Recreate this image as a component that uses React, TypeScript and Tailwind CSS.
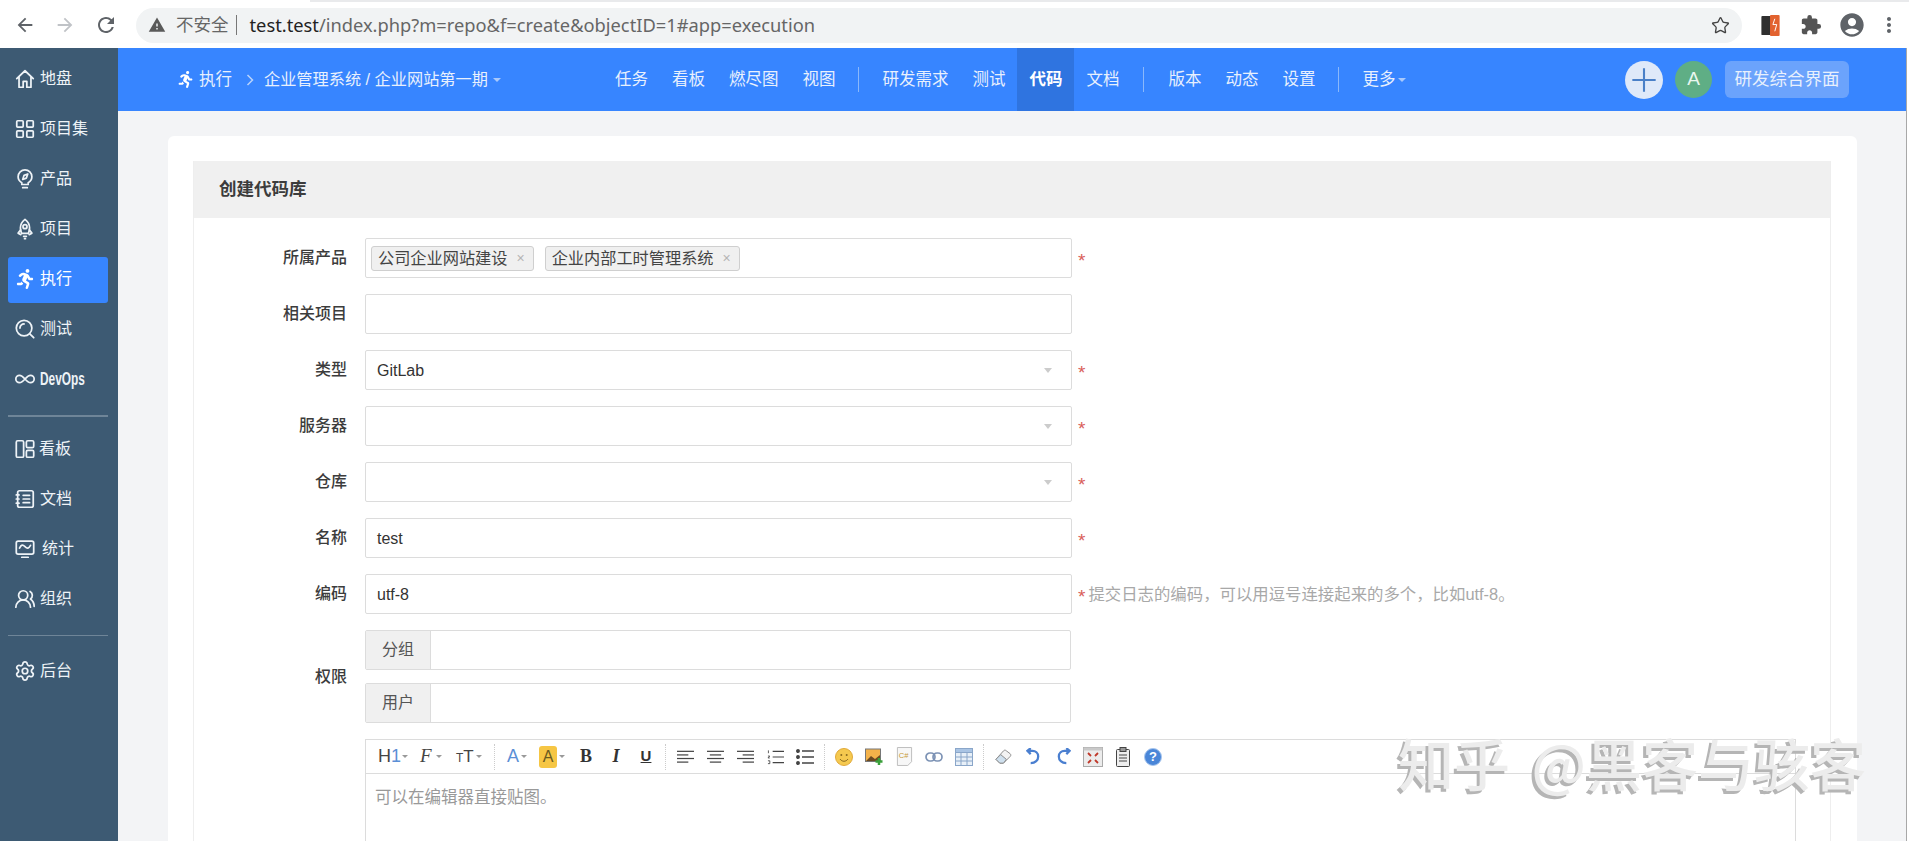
import React from "react";
import { Settings as SettingsIcon, Infinity as InfinityIcon, UsersRound, LayoutGrid, Star } from "lucide-react";
import { MdArrowBack, MdArrowForward, MdRefresh, MdWarning, MdExtension, MdAccountCircle, MdMoreVert } from "react-icons/md";
import { FaRunning } from "react-icons/fa";

const S = ({ children, className = "" }: { children: React.ReactNode; className?: string }) => (
  <svg viewBox="0 0 24 24" fill="none" stroke="currentColor" strokeWidth="1.9" strokeLinecap="round" strokeLinejoin="round" className={"w-[22px] h-[22px] shrink-0 " + className}>
    {children}
  </svg>
);

const Caret = ({ color = "border-t-[#999]", className = "" }: { color?: string; className?: string }) => (
  <span className={"inline-block w-0 h-0 border-x-[3px] border-t-[3px] border-x-transparent " + color + " " + className} />
);

const sideTop = [
  { t: "地盘", i: <S><path d="M3 11.5 12 3l9 8.5M5.5 9.5V21h4.5v-6.5h4V21h4.5V9.5" /></S> },
  { t: "项目集", i: <LayoutGrid className="w-[22px] h-[22px] shrink-0" strokeWidth={1.9} /> },
  { t: "产品", i: <S><path d="M8.5 18v-2C6 14.500 4.500 12.300 4.500 9.500a7.500 7.500 0 0 1 15 0c0 2.800-1.500 5-4 6.500v2Z" /><path d="m15 6.500-1.500 4.500-4 1.500 1.500-4.500ZM9.500 21.500h5" /></S> },
  { t: "项目", i: <S><path d="M12 1.500c3.500 2.500 5 5.800 5 9.500 0 2-.5 3.900-1.300 5.700H8.300C7.500 14.900 7 13 7 11c0-3.700 1.500-7 5-9.500Z" /><circle cx="12" cy="9.500" r="2.200" /><path d="M7.300 13 4.500 16.500l3 1.700M16.700 13l2.800 3.500-3 1.700M10.500 20h3M11.500 22.500h1" /></S> },
];
const sideMid = [
  { t: "测试", i: <S><circle cx="11" cy="11" r="8.500" /><path d="M6.500 11A4.500 4.500 0 0 1 11 6.500M17.500 17.500l4 4" /></S> },
];
const sideBoard = [
  { t: "看板", ml: "ml-[-1px]", i: <S><rect x="2.500" y="3" width="8" height="18" rx="1.500" /><rect x="13.500" y="3" width="8" height="7.500" rx="1.500" /><rect x="13.500" y="13.500" width="8" height="7.500" rx="1.500" /></S> },
  { t: "文档", ml: "", i: <S><rect x="4" y="3" width="17" height="18" rx="2" /><path d="M10 8h7M10 12h7M10 16h7M2.500 7.500h3M2.500 12h3M2.500 16.500h3" /></S> },
  { t: "统计", ml: "ml-[2px]", i: <S><rect x="2.500" y="3.500" width="19" height="14" rx="2" /><path d="M6 11c2-4 3.500-4 6-1.500s4 2 6-1.500M8.500 21h7" /></S> },
  { t: "组织", ml: "", i: <UsersRound className="w-[22px] h-[22px] shrink-0" strokeWidth={1.9} /> },
];

const SideRow = ({ t, i, ml = "" }: { t: string; i: React.ReactNode; ml?: string }) => (
  <div className="h-[50px] ml-2 pl-[6px] flex items-center gap-[4px] text-[16px] text-[#eef3f7]">
    {i}
    <span className={ml}>{t}</span>
  </div>
);

const Input = ({ children, arrow }: { children?: React.ReactNode; arrow?: boolean }) => (
  <div className="w-[707px] h-10 border border-[#dcdcdc] rounded-[2px] bg-white flex items-center pl-[11px] pr-[10px] pt-px text-[16px] text-[#333]">
    <span className="flex-1">{children}</span>
    {arrow && <span className="w-0 h-0 border-x-[4.5px] border-t-[5px] border-x-transparent border-t-[#ccc] mr-[9px]" />}
  </div>
);

const Req = () => <span className="ml-[6px] text-[#d9605a] text-[19px] leading-none mt-[4px]">*</span>;

const Row = ({ label, children }: { label: string; children: React.ReactNode }) => (
  <div className="flex items-center h-10 mb-4">
    <div className="w-[153px] text-right text-[16px] font-medium text-[#3c3c3c] pb-px">{label}</div>
    <div className="ml-[18px] flex items-center">{children}</div>
  </div>
);

const Tag = ({ t }: { t: string }) => (
  <span className="h-[25px] flex items-center bg-[#f0f0f0] border border-[#cfcfcf] rounded-[3px] pl-[6px] pr-[8px] text-[16.2px] text-[#444] mr-[11px]">
    {t}
    <span className="ml-[9px] text-[#b5b5b5] text-[14px] leading-none">×</span>
  </span>
);

const Group = ({ label }: { label: string }) => (
  <div className="w-[706px] h-10 border border-[#dcdcdc] rounded-[2px] flex">
    <div className="w-[65px] bg-[#f0f0f0] border-r border-[#dcdcdc] flex items-center justify-center text-[16px] text-[#555]">{label}</div>
  </div>
);

const Cell = ({ children }: { children: React.ReactNode }) => (
  <div className="w-[30px] flex items-center justify-center">{children}</div>
);
const Sep = () => <div className="w-px h-[26px] mx-[4px] border-l border-dotted border-[#ccc]" />;
const Lines = ({ rows }: { rows: [number, number][] }) => (
  <svg viewBox="0 0 18 14" className="w-[17px] h-[14px]" stroke="#444" strokeWidth="1.3">
    {rows.map(([a, b], k) => <line key={k} x1={a} x2={b} y1={1 + k * 3.8} y2={1 + k * 3.8} />)}
  </svg>
);

const Nav = ({ t, on }: { t: string; on?: boolean }) => (
  <div className={"flex items-center px-3 " + (on ? "bg-[#2f74e0] font-bold text-white" : "")}>{t}</div>
);
const NavSep = ({ w = "mx-[11px]" }: { w?: string }) => <div className={"self-center w-px h-[25px] bg-[#8ab8fb] " + w} />;

export default function App() {
  return (
    <div className="relative w-full h-[841px] overflow-hidden bg-white font-['Liberation_Sans','Noto_Sans_CJK_SC',sans-serif]">
      {/* browser chrome */}
      <div className="h-12 relative">
        <div className="absolute top-0 left-[310px] right-0 h-[2px] bg-[#e9eaec]" />
        <div className="h-12 flex items-center pt-[2px] text-[#555]">
          <MdArrowBack className="ml-[14px] w-[22px] h-[22px] text-[#5f6368]" />
          <MdArrowForward className="ml-[18px] w-[22px] h-[22px] text-[#c0c3c7]" />
          <MdRefresh className="ml-[18px] w-[24px] h-[24px] text-[#5f6368]" />
          <div className="ml-[18px] w-[1606px] h-[35px] rounded-full bg-[#f1f3f4] flex items-center pl-[12px] pr-[12px]">
            <MdWarning className="w-[18px] h-[18px] text-[#5a5a5a]" />
            <span className="ml-[10px] text-[#666] text-[17.5px]">不安全</span>
            <span className="mx-[7px] w-px h-[20px] bg-[#777]" />
            <span className="ml-[6px] font-['Noto_Sans','Noto_Sans_CJK_SC',sans-serif] text-[18.3px] text-[#666]">
              <span className="text-[#222]">test.test</span>/index.php?m=repo&amp;f=create&amp;objectID=1#app=execution
            </span>
            <Star className="ml-auto w-[19px] h-[19px] text-[#444]" strokeWidth={1.7} />
          </div>
          <svg viewBox="0 0 21 24" className="ml-[18px] w-[21px] h-[23px]">
            <rect x="1" y="2" width="10" height="20" fill="#2f2f2f" rx="1" />
            <rect x="10" y="1" width="10" height="22" fill="#e2622f" rx="1" />
            <path d="m15 5-2 6h4l-2 7" fill="none" stroke="#fff" strokeWidth="1" />
          </svg>
          <MdExtension className="ml-[19px] w-[22px] h-[22px] text-[#555]" />
          <MdAccountCircle className="ml-[16px] w-[28px] h-[28px] text-[#5f6368]" />
          <MdMoreVert className="ml-[11px] w-[24px] h-[24px] text-[#5f6368]" />
        </div>
      </div>

      <div className="flex h-[793px]">
        {/* sidebar */}
        <aside className="w-[118px] shrink-0 bg-[#3d5a73] pt-[6px]">
          {sideTop.map((s) => <SideRow key={s.t} t={s.t} i={s.i} />)}
          <div className="h-[50px] pt-[3px]">
            <div className="ml-2 mr-[10px] pl-[7px] h-[46px] pb-[3px] rounded-[3px] bg-[#3785ff] flex items-center gap-[5px] text-[16px] text-white">
              <FaRunning className="w-[20px] h-[20px] shrink-0" />
              <span>执行</span>
            </div>
          </div>
          {sideMid.map((s) => <SideRow key={s.t} t={s.t} i={s.i} />)}
          <div className="h-[50px] ml-2 pl-[6px] flex items-center gap-[4px] text-[#eef3f7]">
            <InfinityIcon className="w-[22px] h-[22px] shrink-0" strokeWidth={1.9} />
            <span className="text-[18px] font-bold scale-x-[0.66] origin-left">DevOps</span>
          </div>
          <div className="ml-2 mr-[10px] mt-[11px] mb-[7px] h-[2px] bg-[#6f8598]" />
          {sideBoard.map((s) => <SideRow key={s.t} t={s.t} i={s.i} ml={s.ml} />)}
          <div className="ml-2 mr-[10px] mt-[11px] mb-[10px] h-px bg-[#6f8598]" />
          <SideRow t="后台" i={<SettingsIcon className="w-[22px] h-[22px] shrink-0" strokeWidth={1.9} />} />
        </aside>

        {/* main */}
        <main className="flex-1 min-w-0 flex flex-col bg-[#f3f4f6] overflow-hidden">
          <header className="h-[63px] shrink-0 bg-[#3785ff] flex items-center pl-[59px] pr-[57px] text-[16.5px] text-[#e8f0fd]">
            <FaRunning className="w-[17px] h-[17px] text-white" />
            <span className="ml-[5px]">执行</span>
            <svg viewBox="0 0 8 12" className="ml-[14px] w-[8px] h-[12px]" fill="none" stroke="#b9d3fb" strokeWidth="1.5"><path d="m1.5 1 5 5-5 5" /></svg>
            <span className="ml-[10px] text-[16.2px]">企业管理系统 / 企业网站第一期</span>
            <Caret color="border-t-[#a9c9fb]" className="ml-[5px] !border-x-[4px] !border-t-[4px]" />
            <nav className="ml-[102px] flex items-stretch h-full">
              <Nav t="任务" /><Nav t="看板" /><Nav t="燃尽图" /><Nav t="视图" />
              <NavSep />
              <Nav t="研发需求" /><Nav t="测试" /><Nav t="代码" on /><Nav t="文档" />
              <NavSep w="mx-[12px]" />
              <Nav t="版本" /><Nav t="动态" /><Nav t="设置" />
              <NavSep />
              <div className="flex items-center px-3">
                更多<Caret color="border-t-[#a9c9fb]" className="ml-[3px] !border-x-[4px] !border-t-[4px]" />
              </div>
            </nav>
            <div className="ml-auto w-[38px] h-[38px] rounded-full bg-[#dfe9f9] flex items-center justify-center">
              <svg viewBox="0 0 24 24" className="w-[28px] h-[28px]" stroke="#4a80c8" strokeWidth="1.8"><path d="M12 2v20M2 12h20" /></svg>
            </div>
            <div className="ml-[12px] w-[37px] h-[37px] rounded-full bg-[#5fae85] flex items-center justify-center text-[#e9f7ef] text-[19px]">A</div>
            <div className="ml-[13px] w-[124px] h-[37px] rounded-[6px] bg-[#6ba3fc] flex items-center justify-center text-[17.5px] text-[#e8f0fd]">研发综合界面</div>
          </header>

          <div className="flex-1 pt-[25px] pl-[50px] pr-[49px] min-h-0">
            <div className="h-[900px] bg-white rounded-md px-[25px] pt-[25px]">
              <div className="h-full border-x border-[#eeeeee] mr-px">
                <div className="h-[57px] bg-[#f0f0f0] flex items-center pl-[25px] text-[17.5px] font-bold text-[#3c3c3c]">创建代码库</div>
                <div className="pt-5">
                  <Row label="所属产品">
                    <div className="w-[707px] h-10 border border-[#dcdcdc] rounded-[2px] flex items-center pl-[5px]">
                      <Tag t="公司企业网站建设" />
                      <Tag t="企业内部工时管理系统" />
                    </div>
                    <Req />
                  </Row>
                  <Row label="相关项目"><Input /></Row>
                  <Row label="类型"><Input arrow>GitLab</Input><Req /></Row>
                  <Row label="服务器"><Input arrow /><Req /></Row>
                  <Row label="仓库"><Input arrow /><Req /></Row>
                  <Row label="名称"><Input>test</Input><Req /></Row>
                  <Row label="编码">
                    <Input>utf-8</Input>
                    <Req />
                    <span className="ml-[3px] text-[16.4px] text-[#a8a8a8]">提交日志的编码，可以用逗号连接起来的多个，比如utf-8。</span>
                  </Row>
                  <div className="flex items-center mb-4 h-[93px]">
                    <div className="w-[153px] text-right text-[16px] font-medium text-[#3c3c3c]">权限</div>
                    <div className="ml-[18px] flex flex-col gap-[13px]">
                      <Group label="分组" />
                      <Group label="用户" />
                    </div>
                  </div>
                  <div className="flex">
                    <div className="w-[153px]" />
                    <div className="ml-[18px] w-[1431px] h-[200px] border border-[#dcdcdc]">
                      <div className="h-[34px] border-b border-[#dcdcdc] flex items-center pl-[12px] text-[#444]">
                        <div className="w-[29px] flex items-center text-[18px]">H<span className="text-[#5b8fd6]">1</span><Caret className="ml-[1px]" /></div>
                        <div className="ml-[13px] w-[20px] flex items-center font-['Liberation_Serif',serif] italic text-[19px]">F<Caret className="ml-[4px]" /></div>
                        <div className="ml-[16px] w-[25px] flex items-center"><span className="text-[12px] mt-[2px]">T</span><span className="text-[17px]">T</span><Caret className="ml-[2px]" /></div>
                        <div className="ml-[13px] w-px h-[26px] border-l border-dotted border-[#ccc]" />
                        <div className="ml-[12px] w-[20px] flex items-center text-[18px] text-[#5b8fd6]">A<Caret className="ml-[2px]" /></div>
                        <div className="ml-[12px] w-[26px] flex items-center text-[16px]"><span className="w-[19px] h-[22px] bg-[#f6c644] rounded-[3px] flex items-center justify-center text-[#6a5a20]">A</span><Caret className="ml-[2px]" /></div>
                        <div className="ml-[6px] flex">
                          <Cell><span className="font-['Liberation_Serif',serif] font-bold text-[18px] text-[#333]">B</span></Cell>
                          <Cell><span className="font-['Liberation_Serif',serif] italic font-bold text-[18px] text-[#333]">I</span></Cell>
                          <Cell><span className="font-bold text-[15px] underline text-[#333]">U</span></Cell>
                        </div>
                        <Sep />
                        <div className="flex">
                          <Cell><Lines rows={[[0,18],[0,12],[0,18],[0,12]]} /></Cell>
                          <Cell><Lines rows={[[0,18],[3,15],[0,18],[3,15]]} /></Cell>
                          <Cell><Lines rows={[[0,18],[6,18],[0,18],[6,18]]} /></Cell>
                          <Cell>
                            <svg viewBox="0 0 18 16" className="w-[17px] h-[16px]" stroke="#444" strokeWidth="1.3"><path d="M6 2h12M6 8h12M6 14h12" /><path d="M1.5 1v3M1 7h2l-2 2h2M1 12h2v3H1" strokeWidth=".9" fill="none" /></svg>
                          </Cell>
                          <Cell>
                            <svg viewBox="0 0 18 16" className="w-[18px] h-[16px]" stroke="#444" strokeWidth="1.3"><path d="M6 2h12M6 8h12M6 14h12" /><circle cx="2" cy="2" r="1.3" fill="#444" /><circle cx="2" cy="8" r="1.3" fill="#444" /><circle cx="2" cy="14" r="1.3" fill="#444" /></svg>
                          </Cell>
                        </div>
                        <Sep />
                        <div className="flex">
                          <Cell>
                            <svg viewBox="0 0 18 18" className="w-[18px] h-[18px]"><circle cx="9" cy="9" r="8.5" fill="#f5c94f" stroke="#e0a93a" /><circle cx="6.3" cy="7" r="1" fill="#8a6a20" /><circle cx="11.7" cy="7" r="1" fill="#8a6a20" /><path d="M5 11c2 3 6 3 8 0" fill="none" stroke="#8a6a20" /></svg>
                          </Cell>
                          <Cell>
                            <svg viewBox="0 0 18 18" className="w-[18px] h-[18px]"><rect x="0.5" y="1" width="15" height="12.5" fill="#f4b24a" stroke="#777" /><path d="M1 13l5-5 4 3 5-4v6H1Z" fill="#6b4a22" /><path d="M14 10v7M10.5 13.5h7" stroke="#3aa03a" strokeWidth="2.5" /></svg>
                          </Cell>
                          <Cell>
                            <svg viewBox="0 0 18 20" className="w-[17px] h-[19px]"><path d="M1.5 .5h15v15l-4 4h-11Z" fill="#f7f7f7" stroke="#bbb" /><text x="3" y="12" fontSize="8" fill="#c79a3a" fontFamily="Liberation Sans">C#</text></svg>
                          </Cell>
                          <Cell>
                            <svg viewBox="0 0 18 10" className="w-[18px] h-[10px]" fill="none" stroke="#7d93b5" strokeWidth="1.7"><rect x="1" y="1" width="9" height="8" rx="4" /><rect x="8" y="1" width="9" height="8" rx="4" /></svg>
                          </Cell>
                          <Cell>
                            <svg viewBox="0 0 18 18" className="w-[18px] h-[18px]" stroke="#8aa6c9" strokeWidth="1"><rect x=".5" y=".5" width="17" height="17" fill="#e8f0f8" /><rect x=".5" y=".5" width="17" height="4" fill="#a9c4e4" /><path d="M6 4.5v13M12 4.5v13M.5 9h17M.5 13h17" fill="none" /></svg>
                          </Cell>
                        </div>
                        <Sep />
                        <div className="flex">
                          <Cell>
                            <svg viewBox="0 0 20 18" className="w-[19px] h-[17px]"><path d="M2 12 10 3c1-1 2-1 3 0l4 3c1 1 1 2 0 3l-7 7H6Z" fill="#f3f3f3" stroke="#888" /><path d="M2 12l5-5 6 5-3 4H6Z" fill="#cfe0ee" stroke="#888" /></svg>
                          </Cell>
                          <Cell>
                            <svg viewBox="0 0 16 18" className="w-[15px] h-[17px]" fill="none" stroke="#4a7fd0" strokeWidth="2.4"><path d="M5 16c5 0 8-3 8-7s-3-6-6-6H2M5 0 1.5 3 5 6.5" /></svg>
                          </Cell>
                          <Cell>
                            <svg viewBox="0 0 16 18" className="w-[15px] h-[17px]" fill="none" stroke="#4a7fd0" strokeWidth="2.4"><path d="M11 16c-5 0-8-3-8-7s3-6 6-6h5M11 0l3.5 3L11 6.5" /></svg>
                          </Cell>
                          <Cell>
                            <svg viewBox="0 0 20 20" className="w-[20px] h-[20px]"><rect x=".5" y=".5" width="19" height="19" fill="#ececec" stroke="#aaa" /><rect x=".5" y=".5" width="19" height="3" fill="#c9c9c9" /><path d="M5 6l3 3M15 6l-3 3M5 16l3-3M15 16l-3-3" stroke="#c0392b" strokeWidth="1.8" /></svg>
                          </Cell>
                          <Cell>
                            <svg viewBox="0 0 16 20" className="w-[16px] h-[20px]"><rect x="1.5" y="2.5" width="13" height="17" rx="1" fill="#eee" stroke="#444" /><rect x="5" y=".5" width="6" height="4" fill="#999" stroke="#444" /><path d="M4 8h8M4 11h8M4 14h8" stroke="#444" /></svg>
                          </Cell>
                          <Cell>
                            <span className="w-[18px] h-[18px] rounded-full bg-[#4a86d8] border border-[#a8c6ee] flex items-center justify-center text-white text-[13px] font-bold leading-none">?</span>
                          </Cell>
                        </div>
                      </div>
                      <div className="pl-[9px] pt-[11px] text-[16.5px] text-[#999]">可以在编辑器直接贴图。</div>
                    </div>
                  </div>
                </div>
              </div>
            </div>
          </div>
        </main>
        <div className="w-[3px] shrink-0 bg-white border-l border-[#a8a8a8]" />
      </div>

      {/* watermark */}
      <div className="absolute left-[1398px] top-[724px] whitespace-nowrap text-[56px] leading-[76px] font-medium text-[#ececec] [text-shadow:-3px_3px_0_#b5b5b5] font-['Noto_Sans_CJK_SC',sans-serif]">
        知乎 <span className="ml-[9px]">@黑客与骇客</span>
      </div>
    </div>
  );
}
